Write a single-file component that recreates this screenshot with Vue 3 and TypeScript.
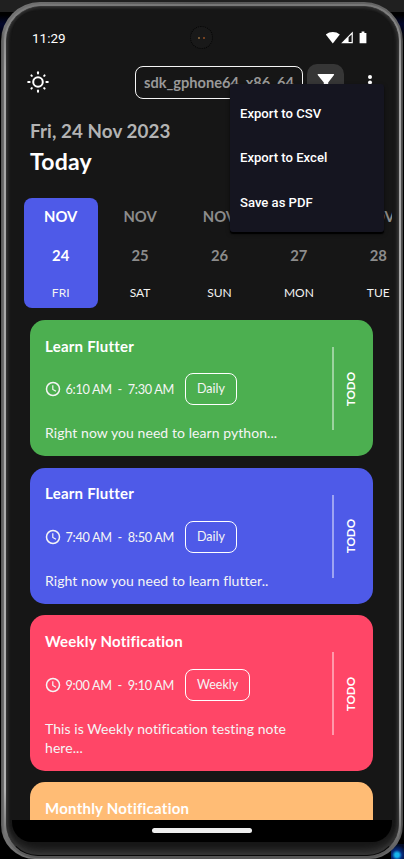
<script setup lang="ts">
interface Day { month: string; date: number; name: string }
interface Task { title: string; start: string; end: string; repeat: string; note: string; tone: string }

const days: Day[] = [
  { month: 'NOV', date: 24, name: 'FRI' },
  { month: 'NOV', date: 25, name: 'SAT' },
  { month: 'NOV', date: 26, name: 'SUN' },
  { month: 'NOV', date: 27, name: 'MON' },
  { month: 'NOV', date: 28, name: 'TUE' },
]

const tasks: Task[] = [
  { title: 'Learn Flutter', start: '6:10 AM', end: '7:30 AM', repeat: 'Daily', note: 'Right now you need to learn python...', tone: 'green' },
  { title: 'Learn Flutter', start: '7:40 AM', end: '8:50 AM', repeat: 'Daily', note: 'Right now you need to learn flutter..', tone: 'blue' },
  { title: 'Weekly Notification', start: '9:00 AM', end: '9:10 AM', repeat: 'Weekly', note: 'This is Weekly notification testing note here...', tone: 'pink' },
  { title: 'Monthly Notification', start: '', end: '', repeat: '', note: '', tone: 'orange' },
]

const actions: string[] = ['Export to CSV', 'Export to Excel', 'Save as PDF']
const rays: number[] = [0, 45, 90, 135, 180, 225, 270, 315]
</script>

<template>
  <div class="stage">
    <div class="glow"></div>
    <div class="phone">
      <div class="rim">
        <div class="glass">
          <div class="camera"><i></i></div>
          <div class="screen">
            <div class="status">
              <span>11:29</span>
              <svg class="signals" width="42" height="14" viewBox="0 0 42 14">
                <path d="M0.8 3.4C4.8 0.1 10.8 0.1 14.8 3.4L7.8 12.4Z" fill="#fff" />
                <path d="M27.8 0.5V12.2H16.2Z" fill="#fff" />
                <path d="M23.6 6.3L26.6 3.4V11H23.6Z" fill="#161616" />
                <path d="M36.6 0.6h2.8v1.3h2v10.3h-6.8V1.9h2z" fill="#fff" />
              </svg>
            </div>

            <header class="toolbar">
              <svg class="sun" width="22" height="22" viewBox="0 0 22 22">
                <circle cx="11" cy="11" r="4.8" fill="none" stroke="#fff" stroke-width="2" />
                <path v-for="r in rays" :key="r" :d="r % 90 ? 'M11 1.7V2.3' : 'M11 1.2V2.6'" :transform="`rotate(${r} 11 11)`" stroke="#fff" stroke-width="2" stroke-linecap="round" />
              </svg>
              <div class="device">sdk_gphone64_x86_64</div>
              <div class="filter">
                <svg width="18" height="20" viewBox="0 0 18 20"><path d="M1.3 1H16.3Q17.8 1 16.8 2.3L11.2 9.5V17H6.8V9.5L0.9 2.3Q0 1 1.3 1Z" fill="#fff" /></svg>
              </div>
              <svg class="more" width="6" height="18" viewBox="0 0 6 18">
                <circle cx="3" cy="3" r="2" fill="#fff" /><circle cx="3" cy="8.6" r="2" fill="#fff" /><circle cx="3" cy="14.2" r="2" fill="#fff" />
              </svg>
              <div class="menu">
                <div v-for="a in actions" :key="a" class="menu-item">{{ a }}</div>
              </div>
            </header>

            <section class="heading">
              <div class="date">Fri, 24 Nov 2023</div>
              <div class="today">Today</div>
            </section>

            <section class="days">
              <div v-for="(d, i) in days" :key="d.date" class="day" :class="{ active: i === 0 }">
                <span class="month">{{ d.month }}</span>
                <span class="num">{{ d.date }}</span>
                <span class="name">{{ d.name }}</span>
              </div>
            </section>

            <main class="tasks">
              <article v-for="t in tasks" :key="t.tone" class="task" :class="t.tone">
                <div class="body">
                  <h2>{{ t.title }}</h2>
                  <template v-if="t.start">
                    <div class="when">
                      <svg width="16" height="16" viewBox="0 0 16 16" fill="none" stroke="currentColor">
                        <circle cx="8" cy="8" r="6.5" stroke-width="1.5" />
                        <path d="M7.8 4.2V8.4L11 10.3" stroke-width="1.2" />
                      </svg>
                      <span class="time">{{ t.start }}&nbsp; -&nbsp; {{ t.end }}</span>
                      <span class="chip">{{ t.repeat }}</span>
                    </div>
                    <p>{{ t.note }}</p>
                  </template>
                </div>
                <template v-if="t.start">
                  <div class="line"></div>
                  <div class="state"><span>TODO</span></div>
                </template>
              </article>
            </main>
            <div class="nav"><div class="pill"></div></div>
          </div>
        </div>
      </div>
    </div>
  </div>
</template>

<style>
body { background: #000; overflow: hidden; }
</style>

<style scoped>
* { box-sizing: border-box; }
.stage {
  position: relative;
  width: 404px;
  height: 859px;
  padding: 2px 1px 0;
  overflow: hidden;
  background: linear-gradient(#202020 0 12px, #000 12px 15px, #02072c 24px, #000 38px 100%);
  font-family: Lato, sans-serif;
  font-variant-ligatures: none;
  color: #fff;
}
.glow {
  position: absolute;
  right: 0;
  bottom: 0;
  width: 13px;
  height: 15px;
  background: radial-gradient(circle at 6px 11px, #16b5ed 0 2px, #062c80 5px, #020b25 10px);
}
.phone {
  position: relative;
  height: 857px;
  padding: 2px 2px 1px 3px;
  border-radius: 39px 39px 34px 34px;
  background: linear-gradient(90deg, #555, #737373 3px, #555 50%, #666 398px, #444);
}
.rim {
  height: 854px;
  padding: 2px;
  border-radius: 37px 37px 33px 33px;
  background: linear-gradient(#777, #a5a5a5 8%, #b2b2b2 92%, #555);
}
.glass {
  position: relative;
  height: 850px;
  padding: 4px 4px 0 5px;
  border: 1px solid #333;
  border-bottom-color: #080808;
  border-radius: 35px 35px 32px 32px;
  background: #161616;
  box-shadow: inset 0 0 3px 1px #333, inset 0 -8px 9px -4px #3b3b3b;
}
.camera {
  position: absolute;
  left: 183px;
  top: 19px;
  display: flex;
  align-items: center;
  justify-content: center;
  width: 23px;
  height: 23px;
  border: 1px dotted #050505;
  border-radius: 50%;
  background: #191919;
}
.camera i {
  width: 7px;
  height: 2px;
  border-left: 2px solid #725735;
  border-right: 2px solid #754020;
}
.screen {
  display: flex;
  flex-direction: column;
  width: 380px;
  height: 831px;
  overflow: hidden;
  border-radius: 24px 24px 20px 20px;
  background: #161616;
}
.status {
  display: flex;
  flex: none;
  justify-content: space-between;
  height: 53px;
  padding: 19px 25px 0 20px;
  font: 13.5px/16px Roboto, sans-serif;
}
.signals { margin-top: 1px; }
.toolbar {
  position: relative;
  display: flex;
  flex: none;
  align-items: flex-start;
  height: 54px;
}
.sun { margin: 7px 0 0 14.5px; }
.device {
  width: 168px;
  height: 32.5px;
  margin: 2px 0 0 86.5px;
  padding-left: 8px;
  border: 1.5px solid #f5f5f5;
  border-radius: 8px;
  color: #999;
  font-size: 14.6px;
  font-weight: 700;
  line-height: 32px;
  white-space: nowrap;
}
.filter {
  display: flex;
  justify-content: center;
  width: 37px;
  height: 36px;
  margin-left: 4px;
  padding-top: 9px;
  border-radius: 10px;
  background: #363636;
}
.more { margin: 10px 0 0 22.5px; }
.menu {
  position: absolute;
  z-index: 2;
  left: 218px;
  top: 20px;
  width: 154px;
  height: 148px;
  padding: 7px 10px;
  border-radius: 3px;
  background: #151520;
  box-shadow: 0 2px 1px #000, 0 2px 4px rgba(0, 0, 0, .4);
}
.menu-item {
  height: 44.4px;
  font: 500 13.1px/45px Roboto, sans-serif;
}
.heading {
  flex: none;
  height: 80px;
  padding-left: 18px;
  font-weight: 700;
}
.date { color: #b3b3b3; font-size: 18.8px; line-height: 26px; letter-spacing: .08px; }
.today { margin-top: 1px; font-size: 23px; line-height: 32px; letter-spacing: .2px; }
.days {
  display: flex;
  flex: none;
  gap: 5.4px;
  height: 122px;
  padding-left: 11.7px;
}
.day {
  display: flex;
  flex: none;
  flex-direction: column;
  align-items: center;
  width: 74px;
  height: 110px;
  padding-top: 8px;
  border-radius: 8px;
  color: #8c8c8c;
}
.day span { line-height: 20px; }
.month, .num { font-size: 14.8px; font-weight: 700; }
.num { margin-top: 19px; }
.name { margin-top: 18px; color: #f2f2f2; font-size: 12px; }
.active { color: #fff; background: #4e5ae8; }
.tasks {
  display: flex;
  flex: 1;
  flex-direction: column;
  gap: 11.7px;
  min-height: 0;
  padding: 0 18.8px 0 18px;
  overflow: hidden;
}
.task {
  display: flex;
  flex: none;
  align-items: center;
  padding: 14.8px 13.4px 13.1px 15px;
  border-radius: 15px;
}
.green { background: #4caf50; }
.blue { background: #4e5ae8; }
.pink { background: #ff4667; }
.orange {
  flex: 1;
  align-items: flex-start;
  padding-bottom: 0;
  border-radius: 15px 15px 0 0;
  background: #ffbc75;
}
.body { flex: 1; }
h2 { margin: 0; font-size: 15px; font-weight: 700; line-height: 22px; letter-spacing: .24px; }
.when {
  display: flex;
  align-items: center;
  height: 32px;
  margin-top: 16.4px;
  color: #f5f5f5;
}
.time { width: 119.5px; margin-left: 4.5px; font-size: 12.7px; letter-spacing: -.32px; white-space: nowrap; }
.chip {
  height: 32px;
  padding: 0 11px;
  border: 1.3px solid #fff;
  border-radius: 8px;
  font-size: 12.5px;
  line-height: 30px;
}
p { width: 270px; margin: 18.2px 0 0; color: #f5f5f5; font-size: 14px; line-height: 19.5px; letter-spacing: .07px; }
.line { width: 1.5px; height: 83px; background: rgba(255, 255, 255, .45); }
.state {
  display: flex;
  align-items: center;
  justify-content: center;
  width: 26px;
  padding-left: 8px;
}
.state span {
  transform: rotate(180deg);
  writing-mode: vertical-rl;
  font-size: 11.6px;
  font-weight: 700;
  line-height: 16px;
}
.nav {
  display: flex;
  flex: none;
  justify-content: center;
  height: 22px;
  padding-top: 8px;
  background: #000;
}
.pill { width: 100px; height: 4.5px; border-radius: 3px; background: #eee; }
</style>
